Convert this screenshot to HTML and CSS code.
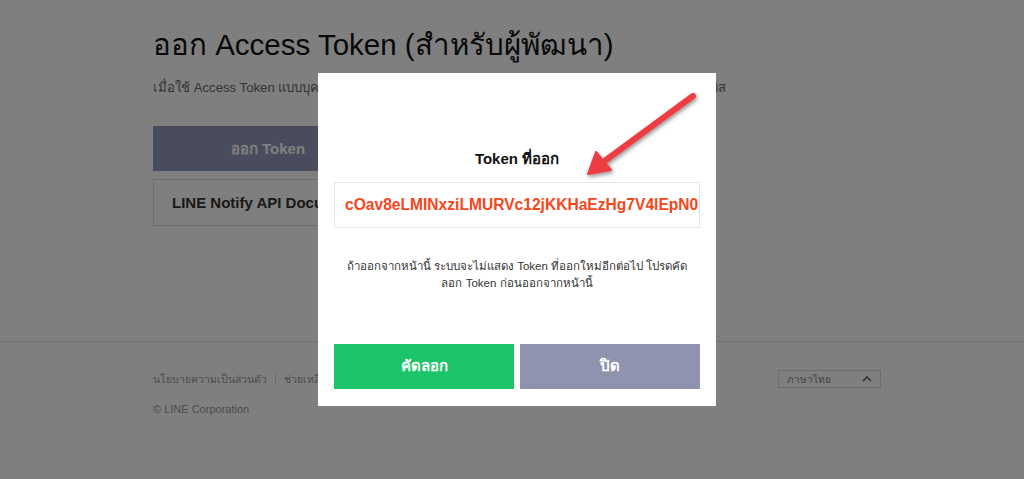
FILE: index.html
```
<!DOCTYPE html>
<html lang="th">
<head>
    <meta charset="UTF-8">
    <title>LINE Notify</title>
    <link rel="stylesheet" href="styles.css">
</head>
<body>
<div class="page">
    <div class="wrap">
        <h1 class="title">ออก Access Token (สำหรับผู้พัฒนา)</h1>
        <p class="lead">เมื่อใช้ Access Token แบบบุคคล จะสามารถตั้งค่าการแจ้งเตือนได้โดยไม่ต้องลงทะเบียนกับเว็บเซอร์วิส</p>
        <div class="actions">
            <button class="btn-issue">ออก Token</button>
            <div class="btn-doc">LINE Notify API Document</div>
        </div>
    </div>
    <footer class="foot">
        <div class="wrap foot-row">
            <div>
                <div class="foot-links">
                    <a>นโยบายความเป็นส่วนตัว</a>
                    <span class="sep"></span>
                    <a>ช่วยเหลือ</a>
                </div>
                <div class="copy">© LINE Corporation</div>
            </div>
            <div class="lang">
                <span>ภาษาไทย</span>
                <svg width="10" height="6" viewBox="0 0 10 6"><path d="M1 5 L5 1 L9 5" fill="none" stroke="#555" stroke-width="1.4"/></svg>
            </div>
        </div>
    </footer>
</div>

<div class="dim">
    <div class="modal">
        <h2 class="modal-title">Token ที่ออก</h2>
        <div class="token">cOav8eLMINxziLMURVc12jKKHaEzHg7V4lEpN0bUmq3</div>
        <p class="note">ถ้าออกจากหน้านี้ ระบบจะไม่แสดง Token ที่ออกใหม่อีกต่อไป โปรดคัด<br>ลอก Token ก่อนออกจากหน้านี้</p>
        <div class="modal-btns">
            <button class="btn-copy">คัดลอก</button>
            <button class="btn-close">ปิด</button>
        </div>
    </div>
</div>

<!-- ลูกศรชี้ token -->
<svg class="arrow" viewBox="0 0 1024 479" width="1024" height="479">
    <defs>
        <filter id="sh" x="-20%" y="-20%" width="140%" height="140%">
            <feDropShadow dx="1" dy="2" stdDeviation="2" flood-color="#000" flood-opacity="0.45"/>
        </filter>
    </defs>
    <g filter="url(#sh)" fill="#ee3d43" stroke="#ee3d43">
        <line x1="693" y1="96" x2="606" y2="160" stroke-width="6" stroke-linecap="round"/>
        <polygon points="588,174 596,152 611,170" stroke-width="2" stroke-linejoin="round"/>
    </g>
</svg>
</body>
</html>
```
FILE: styles.css
```
body{
    margin:0;
    font-family:"Liberation Sans", "Noto Sans", sans-serif;
    color:#111;
    background:#fff;
    height:479px;
    overflow:hidden;
}
.page{
    height:479px;
}
.wrap{
    max-width:728px;
    margin:0 auto;
    padding-left:10px;
}
.title{
    margin:0;
    padding-top:27px;
    font-size:29.5px;
    font-weight:normal;
    line-height:36px;
    color:#111;
}
.lead{
    margin:16px 0 0;
    font-size:13.2px;
    line-height:18px;
    color:#666;
    white-space:nowrap;
}
.actions{
    margin-top:29px;
    width:230px;
}
.btn-issue{
    display:block;
    width:100%;
    height:45px;
    border:0;
    background:#9398b9;
    color:#fff;
    font:bold 15px "Liberation Sans", sans-serif;
    cursor:pointer;
}
.btn-doc{
    margin-top:8px;
    height:47px;
    border:1px solid #ddd;
    box-sizing:border-box;
    display:flex;
    align-items:center;
    padding-left:18px;
    font-size:15px;
    font-weight:bold;
    color:#333;
    white-space:nowrap;
    overflow:hidden;
    width:300px;
}
.foot{
    margin-top:115px;
    border-top:1px solid #e0e0e0;
}
.foot-row{
    display:flex;
    justify-content:space-between;
    align-items:flex-start;
    padding-top:29px;
}
.foot-links{
    display:flex;
    align-items:center;
    font-size:10.5px;
    color:#999;
    line-height:16px;
}
.sep{
    display:inline-block;
    width:1px;
    height:10px;
    background:#ddd;
    margin:0 8px;
}
.copy{
    margin-top:16px;
    font-size:11px;
    color:#999;
}
.lang{
    width:103px;
    height:18px;
    border:1px solid #ddd;
    display:flex;
    align-items:center;
    justify-content:space-between;
    padding:0 8px;
    box-sizing:border-box;
    font-size:10px;
    color:#888;
    margin-top:-1px;
}
.dim{
    position:fixed;
    inset:0;
    background:rgba(0,0,0,0.5);
    display:flex;
    align-items:center;
    justify-content:center;
}
.modal{
    width:398px;
    margin-left:10px;
    margin-top:-1px;
    background:#fff;
    box-sizing:border-box;
    padding:76px 16px 17px;
    text-align:center;
}
.modal-title{
    margin:0;
    font-size:15px;
    line-height:20px;
    font-weight:bold;
    color:#111;
}
.token{
    margin-top:13px;
    height:46px;
    border:1px solid #e6e6e6;
    box-sizing:border-box;
    display:flex;
    align-items:center;
    padding-left:10px;
    white-space:nowrap;
    overflow:hidden;
    font-size:15.6px;
    font-weight:bold;
    color:#f4471d;
    text-align:left;
}
.note{
    margin:30px 0 0;
    font-size:11.5px;
    line-height:17px;
    color:#333;
    white-space:nowrap;
}
.modal-btns{
    margin-top:52px;
    display:flex;
    gap:6px;
}
.modal-btns button{
    flex:1;
    height:45px;
    border:0;
    color:#fff;
    font:bold 15px "Liberation Sans", sans-serif;
    cursor:pointer;
}
.btn-copy{
    background:#1bc466;
}
.btn-close{
    background:#8f93ae;
}
.arrow{
    position:fixed;
    left:0;
    top:0;
    pointer-events:none;
}
```
